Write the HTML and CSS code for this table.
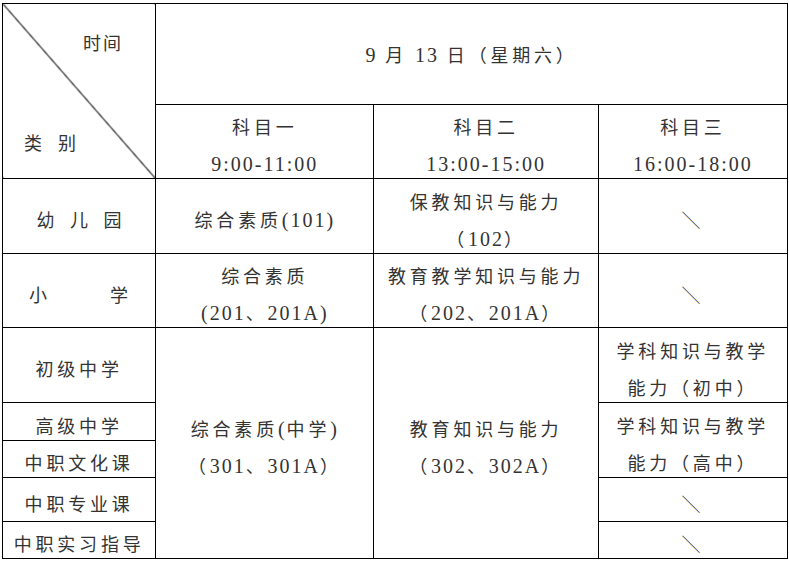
FILE: index.html
```html
<!DOCTYPE html>
<html lang="zh-CN">
<head>
<meta charset="utf-8">
<title>考试时间安排</title>
<link rel="stylesheet" href="styles.css">
</head>
<body>
<table class="sched">
  <colgroup>
    <col class="c1"><col class="c2"><col class="c3"><col class="c4">
  </colgroup>
  <tr class="h1">
    <td rowspan="2" class="diag">
      <div class="diag-in">
        <span class="t-time">时间</span>
        <span class="t-cat">类别</span>
      </div>
    </td>
    <td colspan="3" class="date"><span class="n">9</span> 月 <span class="n">13</span> 日（星期六）</td>
  </tr>
  <tr class="h2">
    <td><div class="c">科目一<br><span class="n">9:00-11:00</span></div></td>
    <td><div class="c">科目二<br><span class="n">13:00-15:00</span></div></td>
    <td><div class="c">科目三<br><span class="n">16:00-18:00</span></div></td>
  </tr>
  <tr class="r1">
    <td><div class="c"><span class="sp1">幼儿园</span></div></td>
    <td><div class="c">综合素质<span class="n">(101)</span></div></td>
    <td><div class="c">保教知识与能力<br>（<span class="n">102</span>）</div></td>
    <td class="na"><div class="c">＼</div></td>
  </tr>
  <tr class="r2">
    <td class="xl"><div class="c"><span class="sp2">小学</span></div></td>
    <td><div class="c">综合素质<br><span class="n">(201</span>、<span class="n">201A)</span></div></td>
    <td><div class="c">教育教学知识与能力<br>（<span class="n">202</span>、<span class="n">201A</span>）</div></td>
    <td class="na"><div class="c">＼</div></td>
  </tr>
  <tr class="r3">
    <td><div class="c">初级中学</div></td>
    <td rowspan="5"><div class="c">综合素质<span class="n">(</span>中学<span class="n">)</span><br>（<span class="n">301</span>、<span class="n">301A</span>）</div></td>
    <td rowspan="5"><div class="c">教育知识与能力<br>（<span class="n">302</span>、<span class="n">302A</span>）</div></td>
    <td><div class="c">学科知识与教学<br>能力（初中）</div></td>
  </tr>
  <tr class="r4">
    <td><div class="c">高级中学</div></td>
    <td rowspan="2"><div class="c">学科知识与教学<br>能力（高中）</div></td>
  </tr>
  <tr class="r5">
    <td><div class="c">中职文化课</div></td>
  </tr>
  <tr class="r6">
    <td><div class="c">中职专业课</div></td>
    <td class="na"><div class="c">＼</div></td>
  </tr>
  <tr class="r7">
    <td><div class="c">中职实习指导</div></td>
    <td class="na"><div class="c">＼</div></td>
  </tr>
</table>
</body>
</html>
```

FILE: styles.css
```css
html, body {
  margin: 0;
  padding: 0;
  background: #fff;
}
body {
  padding: 3px 0 0 2px;
  font-family: "Noto Sans CJK SC", "Liberation Serif", sans-serif;
  font-size: 18px;
  color: #333;
}
.sched {
  border-collapse: collapse;
  table-layout: fixed;
  width: 786px;
}
.c1 { width: 153px; }
.c2 { width: 218px; }
.c3 { width: 224px; }
.c4 { width: 189px; }
.sched td {
  border: 1.5px solid #000;
  padding: 0;
  text-align: center;
  vertical-align: middle;
  line-height: 37px;
  letter-spacing: 3.8px;
  white-space: nowrap;
}
/* nudge text slightly below the optical centre, as in the source document */
.c {
  margin: 2px 0 -5px 0;
}
.n {
  font-family: "Liberation Serif", serif;
  font-size: 20px;
  line-height: 1;
  letter-spacing: 2px;
}
.h1 { height: 101px; }
.h2 { height: 74px; }
.r1 { height: 75px; }
.r2 { height: 74px; }
.r3 { height: 75px; }
.r4 { height: 38px; }
.r5 { height: 37px; }
.r6 { height: 44px; }
.r7 { height: 37px; }

.sched td.diag {
  background: linear-gradient(to top right, transparent calc(50% - 1px), #000 50%, transparent calc(50% + 1px));
}
.diag-in {
  height: 173px;
  box-sizing: border-box;
  display: flex;
  flex-direction: column;
  justify-content: space-between;
  padding: 19px 0 17px 0;
  text-align: left;
}
.t-time {
  padding-left: 80px;
  letter-spacing: 2px;
}
.t-cat {
  padding-left: 21px;
  letter-spacing: 16px;
}
.sp1 {
  letter-spacing: 15.5px;
  margin-right: -15.5px;
}
.sched td.xl {
  text-align: left;
  padding-left: 26px;
}
.sp2 {
  letter-spacing: 63px;
}
.na {
  font-weight: 300;
  font-size: 19px;
}
```
